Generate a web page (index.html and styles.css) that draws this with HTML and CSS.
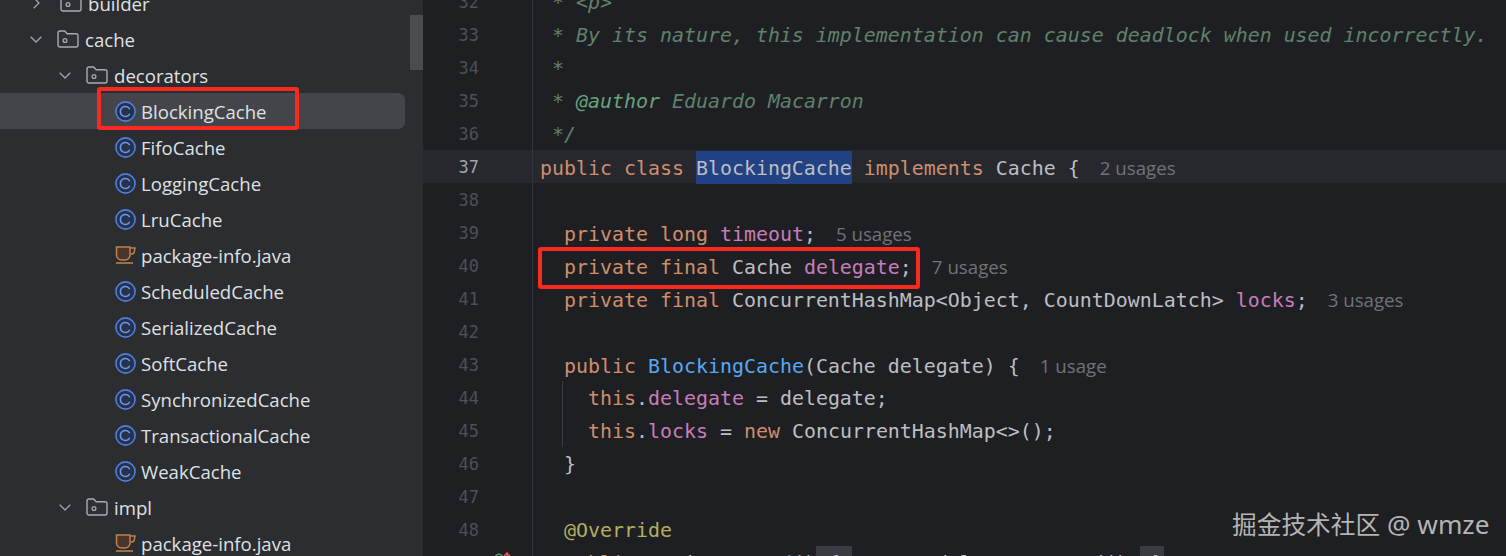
FILE: index.html
```html
<!DOCTYPE html>
<html lang="en">
<head>
<meta charset="utf-8">
<title>BlockingCache</title>
<link rel="stylesheet" href="styles.css">
</head>
<body>
<svg class="defs" width="0" height="0" aria-hidden="true">
  <defs>
    <symbol id="cls" viewBox="0 0 21 21">
      <circle cx="10.5" cy="10.5" r="9.6" fill="#25324d" stroke="#4f7fdc" stroke-width="1.6"/>
      <path d="M14.4 7.6a5 5 0 1 0 0 5.8" fill="none" stroke="#6f97e6" stroke-width="1.6" stroke-linecap="round"/>
    </symbol>
    <symbol id="folder" viewBox="0 0 22 18">
      <path d="M1 3a2 2 0 0 1 2-2h4.6l2.6 2.8H19a2 2 0 0 1 2 2V15a2 2 0 0 1-2 2H3a2 2 0 0 1-2-2Z" fill="#2f3034" stroke="#a8abb0" stroke-width="1.4"/>
      <circle cx="8" cy="10.5" r="1.9" fill="none" stroke="#a8abb0" stroke-width="1.3"/>
    </symbol>
    <symbol id="cup" viewBox="0 0 21 18">
      <path d="M1.5 1h13.5v8a5 5 0 0 1-5 5H6.500a5 5 0 0 1-5-5Z" fill="#4a352d" stroke="#c17f4e" stroke-width="1.5"/>
      <path d="M15 2h5l-.6 3.500a3 3 0 0 1-3 2.500H15" fill="none" stroke="#c17f4e" stroke-width="1.5"/>
      <path d="M1 17h17" fill="none" stroke="#c17f4e" stroke-width="1.600"/>
    </symbol>
    <symbol id="down" viewBox="0 0 12 7">
      <path d="M.7.700 6 6l5.300-5.300" fill="none" stroke="#a0a3a9" stroke-width="1.300"/>
    </symbol>
    <symbol id="right" viewBox="0 0 7 12">
      <path d="M.7.700 6 6 .7 11.300" fill="none" stroke="#a0a3a9" stroke-width="1.300"/>
    </symbol>
  </defs>
</svg>

<div class="app">
  <aside class="sidebar">
    <div class="thumb"></div>
    <ul class="tree">
      <li class="row l1"><svg class="arrow-r"><use href="#right"/></svg><svg class="ic-folder"><use href="#folder"/></svg><span>builder</span></li>
      <li class="row l1"><svg class="arrow-d"><use href="#down"/></svg><svg class="ic-folder"><use href="#folder"/></svg><span>cache</span></li>
      <li class="row l2"><svg class="arrow-d"><use href="#down"/></svg><svg class="ic-folder"><use href="#folder"/></svg><span>decorators</span></li>
      <li class="row l3 selected"><svg class="ic-class"><use href="#cls"/></svg><span>BlockingCache</span><div class="mark mark-tree"></div></li>
      <li class="row l3"><svg class="ic-class"><use href="#cls"/></svg><span>FifoCache</span></li>
      <li class="row l3"><svg class="ic-class"><use href="#cls"/></svg><span>LoggingCache</span></li>
      <li class="row l3"><svg class="ic-class"><use href="#cls"/></svg><span>LruCache</span></li>
      <li class="row l3"><svg class="ic-class ic-cup"><use href="#cup"/></svg><span>package-info.java</span></li>
      <li class="row l3"><svg class="ic-class"><use href="#cls"/></svg><span>ScheduledCache</span></li>
      <li class="row l3"><svg class="ic-class"><use href="#cls"/></svg><span>SerializedCache</span></li>
      <li class="row l3"><svg class="ic-class"><use href="#cls"/></svg><span>SoftCache</span></li>
      <li class="row l3"><svg class="ic-class"><use href="#cls"/></svg><span>SynchronizedCache</span></li>
      <li class="row l3"><svg class="ic-class"><use href="#cls"/></svg><span>TransactionalCache</span></li>
      <li class="row l3"><svg class="ic-class"><use href="#cls"/></svg><span>WeakCache</span></li>
      <li class="row l2"><svg class="arrow-d"><use href="#down"/></svg><svg class="ic-folder"><use href="#folder"/></svg><span>impl</span></li>
      <li class="row l3"><svg class="ic-class ic-cup"><use href="#cup"/></svg><span>package-info.java</span></li>
    </ul>
  </aside>

  <main class="editor">
    <div class="line"><div class="num">32</div><div class="code"><span class="doc"> * &lt;p&gt;</span></div></div>
    <div class="line"><div class="num">33</div><div class="code"><span class="doc"> * By its nature, this implementation can cause deadlock when used incorrectly.</span></div></div>
    <div class="line"><div class="num">34</div><div class="code"><span class="doc"> *</span></div></div>
    <div class="line"><div class="num">35</div><div class="code"><span class="doc"> * </span><span class="doc tag">@author</span><span class="doc"> Eduardo Macarron</span></div></div>
    <div class="line"><div class="num">36</div><div class="code"><span class="doc"> */</span></div></div>
    <div class="line current"><div class="num">37</div><div class="code"><span class="kw">public class </span><span class="sel">BlockingCache</span><span class="kw"> implements </span>Cache {<span class="hint">2 usages</span></div></div>
    <div class="line"><div class="num">38</div><div class="code"></div></div>
    <div class="line"><div class="num">39</div><div class="code">  <span class="kw">private long </span><span class="field">timeout</span>;<span class="hint">5 usages</span></div></div>
    <div class="line"><div class="num">40</div><div class="code">  <span class="kw">private final </span>Cache <span class="field">delegate</span>;<span class="hint">7 usages</span><div class="mark mark-code"></div></div></div>
    <div class="line"><div class="num">41</div><div class="code">  <span class="kw">private final </span>ConcurrentHashMap&lt;Object, CountDownLatch&gt; <span class="field">locks</span>;<span class="hint">3 usages</span></div></div>
    <div class="line"><div class="num">42</div><div class="code"></div></div>
    <div class="line"><div class="num">43</div><div class="code">  <span class="kw">public </span><span class="fn">BlockingCache</span>(Cache delegate) {<span class="hint">1 usage</span></div></div>
    <div class="line"><div class="num">44</div><div class="code guide">    <span class="kw">this</span>.<span class="field">delegate</span> = delegate;</div></div>
    <div class="line"><div class="num">45</div><div class="code guide">    <span class="kw">this</span>.<span class="field">locks</span> = <span class="kw">new </span>ConcurrentHashMap&lt;&gt;();</div></div>
    <div class="line"><div class="num">46</div><div class="code">  }</div></div>
    <div class="line"><div class="num">47</div><div class="code"></div></div>
    <div class="line"><div class="num">48</div><div class="code">  <span class="ann">@Override</span></div></div>
    <div class="line"><div class="num"><svg class="gutter-ic" viewBox="0 0 18 10"><circle cx="5" cy="6" r="3.800" fill="none" stroke="#57965c" stroke-width="1.500"/><path d="M13 1v8M10 4l3-3 3 3" fill="none" stroke="#e05555" stroke-width="1.500"/></svg></div><div class="code">  <span class="kw">public </span>String <span class="fn">getId</span>()<span class="fold-a"> { </span><span class="kw">return </span>delegate.getId();<span class="fold-b"> }</span></div></div>
  </main>
</div>

<div class="watermark">掘金技术社区<span class="watermark-latin"> @ wmze</span></div>
</body>
</html>
```

FILE: styles.css
```css
* { box-sizing: border-box; }

html, body {
  margin: 0;
  height: 556px;
  overflow: hidden;
  background: #1e1f22;
}

.defs { display: block; height: 0; }

.app {
  display: flex;
  height: 556px;
  overflow: hidden;
}

/* Project tree */
.sidebar {
  position: relative;
  flex: 0 0 423px;
  height: 556px;
  background: #2b2d30;
  overflow: hidden;
  font-family: "Open Sans", sans-serif;
  font-size: 18.6px;
  color: #dfe1e5;
}

.thumb {
  position: absolute;
  left: 410px;
  top: 15px;
  width: 13px;
  height: 55px;
  background: #4a4c4f;
}

.tree {
  list-style: none;
  margin: -15px 0 0;
  padding: 0;
}

.row {
  position: relative;
  display: flex;
  align-items: center;
  width: 405px;
  height: 36px;
  white-space: nowrap;
}

.l1 { padding-left: 30px; }
.l2 { padding-left: 59px; }
.l3 { padding-left: 115px; }

.selected {
  background: #43454a;
  border-radius: 0 7px 7px 0;
}

.arrow-d { width: 12px; height: 7px; margin-right: 15px; }
.arrow-r { width: 7px; height: 12px; margin: 0 20px 0 3px; }
.ic-folder { width: 22px; height: 18px; margin-right: 6px; }
.ic-class { width: 21px; height: 21px; margin-right: 5px; flex: none; }
.ic-cup { height: 18px; }

/* Red annotation frames */
.mark {
  position: absolute;
  border: 4px solid #fa2a1e;
  border-radius: 3px;
}

.mark-tree { left: 97px; top: -6px; width: 202px; height: 43px; }
.mark-code { left: 5px; top: -2px; width: 382px; height: 42px; }

/* Code editor */
.editor {
  flex: 1;
  margin-top: -15px;
  min-width: 0;
  font-family: "DejaVu Sans Mono", monospace;
  font-size: 19.93px;
  color: #bcbec4;
}

.line {
  display: flex;
  height: 33px;
  line-height: 33px;
}

.current { background: #26282e; }

.num {
  position: relative;
  flex: 0 0 110px;
  padding: 1px 53px 0 0;
  border-right: 1px solid #313438;
  text-align: right;
  font-size: 17px;
  color: #4b5059;
}

.current .num { color: #a1a3ab; }

.code {
  position: relative;
  flex: 1;
  padding: 1px 0 0 7px;
  white-space: pre;
}

.guide::before {
  content: "";
  position: absolute;
  left: 29px;
  top: 0;
  bottom: 0;
  width: 1px;
  background: #393b40;
}

.doc { color: #5f826b; font-style: italic; }
.tag { color: #67a37c; }
.kw { color: #cf8e6d; }
.field { color: #c77dbb; }
.fn { color: #56a8f5; }
.ann { color: #b3ae60; }
.sel { background: #214283; padding: 6px 0 4px; }

.hint {
  margin-left: 20px;
  font-family: "Open Sans", sans-serif;
  font-size: 18.7px;
  color: #6f737a;
}

.fold-a, .fold-b { background: #393b40; padding: 6px 0 4px; }

.gutter-ic {
  position: absolute;
  left: 71px;
  top: 6px;
  width: 18px;
  height: 10px;
}

.watermark {
  position: absolute;
  left: 1232px;
  top: 506px;
  font-family: "Noto Sans", "Noto Sans CJK SC", sans-serif;
  font-size: 24.7px;
  line-height: 36px;
  white-space: nowrap;
  color: #b4b4b4;
}

.watermark-latin { font-size: 26.2px; }
```
